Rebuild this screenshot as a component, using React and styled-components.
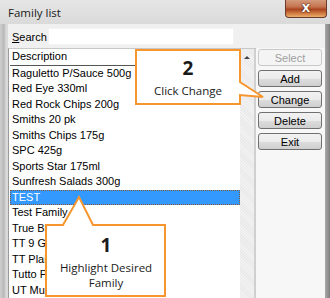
import React from "react";
import styled, { createGlobalStyle } from "styled-components";

const GlobalStyle = createGlobalStyle`
  html, body {
    margin: 0;
    padding: 0;
    width: 330px;
    height: 298px;
    overflow: hidden;
    background: #ffffff;
  }
`;

const Window = styled.div`
  position: relative;
  width: 330px;
  height: 298px;
  display: flex;
  flex-direction: column;
  background: linear-gradient(90deg, #cfcfcf 0px, #b8b8b8 4px, #d9d9d9 6px);
  font-family: "Liberation Sans", Arial, sans-serif;
  overflow: hidden;
`;

const TitleBar = styled.div`
  height: 24px;
  display: flex;
  align-items: flex-start;
  padding-left: 8px;
  background: linear-gradient(180deg, #e6e6e6 0%, #dadada 100%);
`;

const Title = styled.span`
  margin-top: 5px;
  font-family: "Open Sans", "Liberation Sans", sans-serif;
  font-size: 11.5px;
  color: #1a1a1a;
`;

const CloseButton = styled.div`
  margin-left: auto;
  margin-right: 3px;
  width: 42px;
  height: 18px;
  border: 1px solid #6b3a2a;
  border-top: none;
  border-radius: 0 0 4px 4px;
  box-sizing: border-box;
  background: linear-gradient(180deg, #d49a7c 0%, #c4744f 40%, #a8441f 55%, #d98a4c 85%, #e8b070 100%);
  display: flex;
  align-items: center;
  justify-content: center;
  color: #fff;
  font-family: "DejaVu Sans", sans-serif;
  font-weight: bold;
  font-size: 11px;
  text-shadow: 0 0 2px #4a1a0a, 0 0 1px #4a1a0a;
`;

const Body = styled.div`
  flex: 1;
  display: flex;
  flex-direction: column;
  margin-left: 8px;
  margin-right: 5px;
  background: #f0f0f0;
  min-height: 0;
`;

const RightFrame = styled.div`
  position: absolute;
  top: 24px;
  right: 0;
  width: 5px;
  bottom: 0;
  background: linear-gradient(90deg, #a8a8a8, #808080);
`;

const SearchRow = styled.div`
  height: 24px;
  display: flex;
  align-items: center;
  padding-top: 1px;
  box-sizing: border-box;
`;

const SearchLabel = styled.span`
  margin-left: 4px;
  width: 36px;
  font-size: 11px;
  color: #000;
`;

const Underline = styled.span`
  text-decoration: underline;
`;

const SearchInput = styled.div`
  width: 186px;
  height: 17px;
  background: #fff;
  border: 1px solid #f3f3f3;
  box-sizing: border-box;
`;

const Main = styled.div`
  flex: 1;
  display: flex;
  min-height: 0;
`;

const ListBox = styled.div`
  width: 248px;
  display: flex;
  background: #fff;
  border-left: 1px solid #9a9a9a;
  border-top: 1px solid #c8c8c8;
  box-sizing: border-box;
`;

const ListColumn = styled.div`
  flex: 1;
  display: flex;
  flex-direction: column;
  padding-left: 1px;
`;

const Header = styled.div`
  height: 16px;
  line-height: 15px;
  padding-left: 2px;
  font-size: 11px;
  color: #000;
  border-bottom: 1px solid #555;
`;

const Row = styled.div`
  height: 16px;
  white-space: nowrap;
  box-sizing: border-box;
  font-size: 11px;
  color: ${(p) => (p.$selected ? "#fff" : "#000")};
  background: ${(p) => (p.$selected ? "#3399ff" : "transparent")};
  border: ${(p) => (p.$selected ? "1px dotted #8a5a3a" : "none")};
  padding-left: ${(p) => (p.$selected ? "1px" : "2px")};
  line-height: ${(p) => (p.$selected ? "13px" : "15px")};
`;

const ScrollBar = styled.div`
  width: 14px;
  background: repeating-linear-gradient(45deg, #f2f2f2 0 1px, #e9e9e9 1px 2px);
  border-right: 2px solid #d0d0d0;
  display: flex;
  justify-content: center;
  padding-top: 7px;
`;

const ArrowUp = styled.div`
  width: 0;
  height: 0;
  border-left: 3px solid transparent;
  border-right: 3px solid transparent;
  border-bottom: 3px solid #444;
`;

const ButtonPanel = styled.div`
  flex: 1;
  background: #f7f7f7;
  display: flex;
  flex-direction: column;
  gap: 4px;
  padding: 1px 0 0 2px;
`;

const Button = styled.div`
  width: 64px;
  height: 17px;
  box-sizing: border-box;
  border: 1px solid ${(p) => (p.$disabled ? "#c9c9c9" : "#707070")};
  border-radius: 3px;
  background: ${(p) =>
    p.$disabled
      ? "#f4f4f4"
      : "linear-gradient(180deg, #f2f2f2 0%, #ebebeb 50%, #dddddd 51%, #cfcfcf 100%)"};
  color: ${(p) => (p.$disabled ? "#a0a0a0" : "#000")};
  font-size: 11px;
  display: flex;
  align-items: center;
  justify-content: center;
`;

const Callout = styled.div`
  position: absolute;
  left: ${(p) => p.$left}px;
  top: ${(p) => p.$top}px;
  width: ${(p) => p.$width}px;
  height: ${(p) => p.$height}px;
`;

const CalloutShape = styled.svg`
  position: absolute;
  left: 0;
  top: 0;
  overflow: visible;
`;

const CalloutText = styled.div`
  position: absolute;
  left: ${(p) => p.$left}px;
  top: ${(p) => p.$top}px;
  width: ${(p) => p.$width}px;
  display: flex;
  flex-direction: column;
  align-items: center;
  font-family: "Open Sans", "Noto Sans", sans-serif;
  color: #1a1a1a;
  text-align: center;
`;

const Number = styled.div`
  font-size: 19px;
  font-weight: bold;
  line-height: 26px;
`;

const Caption = styled.div`
  margin-top: 2px;
  font-size: 11.5px;
  line-height: 15px;
`;

const items = [
  "Raguletto P/Sauce 500g",
  "Red Eye 330ml",
  "Red Rock Chips 200g",
  "Smiths 20 pk",
  "Smiths Chips 175g",
  "SPC 425g",
  "Sports Star 175ml",
  "Sunfresh Salads 300g",
  "TEST",
  "Test Family",
  "True Blue Milk 2L",
  "TT 9 Grain Bread",
  "TT Plain Flour 1kg",
  "Tutto Pasta 500g",
  "UT Mushrooms 200g",
];

const ORANGE = "#f7962f";

export default function App() {
  return (
    <>
      <GlobalStyle />
      <Window>
        <TitleBar>
          <Title>Family list</Title>
          <CloseButton>X</CloseButton>
        </TitleBar>
        <Body>
          <SearchRow>
            <SearchLabel>
              <Underline>S</Underline>earch
            </SearchLabel>
            <SearchInput />
          </SearchRow>
          <Main>
            <ListBox>
              <ListColumn>
                <Header>Description</Header>
                {items.map((it) => (
                  <Row key={it} $selected={it === "TEST"}>
                    {it}
                  </Row>
                ))}
              </ListColumn>
              <ScrollBar>
                <ArrowUp />
              </ScrollBar>
            </ListBox>
            <ButtonPanel>
              <Button $disabled>Select</Button>
              <Button>Add</Button>
              <Button>Change</Button>
              <Button>Delete</Button>
              <Button>Exit</Button>
            </ButtonPanel>
          </Main>
        </Body>
        <RightFrame />

        <Callout $left={135} $top={49} $width={130} $height={56}>
          <CalloutShape width="130" height="56">
            <path
              d="M1 1 H105 V33 L128 48 L105 46 V55 H1 Z"
              fill="#fff"
              stroke={ORANGE}
              strokeWidth="2"
              strokeLinejoin="miter"
            />
          </CalloutShape>
          <CalloutText $left={1} $top={6} $width={104}>
            <Number>2</Number>
            <Caption>Click Change</Caption>
          </CalloutText>
        </Callout>

        <Callout $left={45} $top={196} $width={122} $height={101}>
          <CalloutShape width="122" height="101">
            <path
              d="M1 29 H18 L34 1 L48 29 H120 V100 H1 Z"
              fill="#fff"
              stroke={ORANGE}
              strokeWidth="2"
              strokeLinejoin="miter"
            />
          </CalloutShape>
          <CalloutText $left={1} $top={36} $width={120}>
            <Number>1</Number>
            <Caption>
              Highlight Desired
              <br />
              Family
            </Caption>
          </CalloutText>
        </Callout>
      </Window>
    </>
  );
}
